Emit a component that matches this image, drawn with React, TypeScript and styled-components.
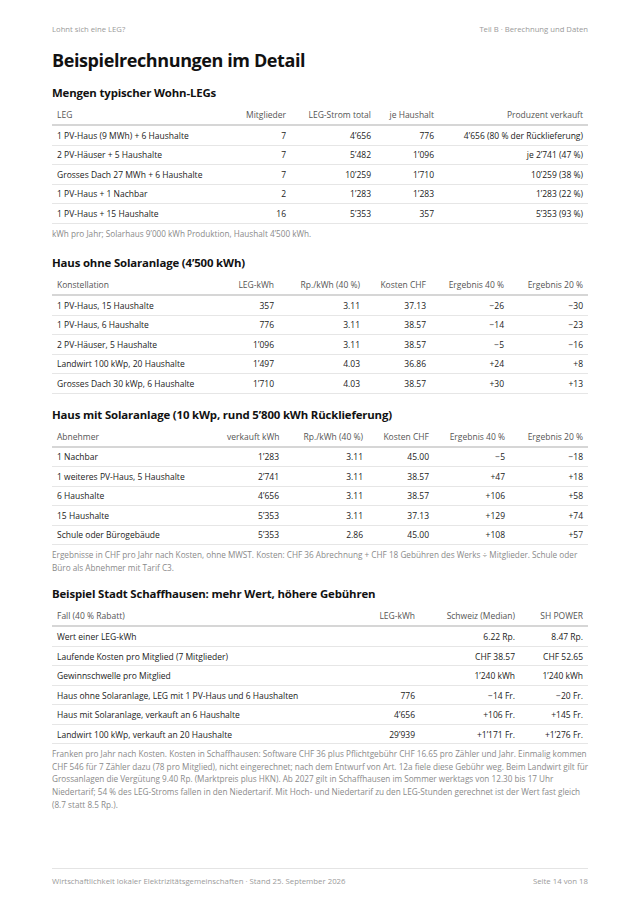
import React from "react";
import styled, { createGlobalStyle } from "styled-components";

const Global = createGlobalStyle`
  html, body { margin: 0; padding: 0; background: #fff; }
  body { font-family: "Open Sans", "Noto Sans", sans-serif; color: #1a1a1a; }
`;

const Page = styled.div`
  width: 640px;
  min-height: 906px;
  box-sizing: border-box;
  padding: 24px 52px 20px;
  display: flex;
  flex-direction: column;
`;

const RunningHead = styled.header`
  display: flex;
  justify-content: space-between;
  font-size: 7.7px;
  color: #9a9a9a;
  line-height: 10px;
`;

const Title = styled.h1`
  margin: 13px 0 0;
  font-size: 18px;
  letter-spacing: -0.4px;
  font-weight: 700;
  color: #111;
  line-height: 26px;
`;

const SectionTitle = styled.h2<{ $top: number }>`
  margin: ${(p) => p.$top}px 0 4px;
  font-size: 11.4px;
  letter-spacing: -0.15px;
  font-weight: 700;
  color: #111;
  line-height: 16px;
`;

const Table = styled.table`
  width: 100%;
  border-collapse: collapse;
  table-layout: fixed;
  font-size: 8.5px;
`;

const Col = styled.col<{ $w: number }>`
  width: ${(p) => p.$w}px;
`;

const Th = styled.th<{ $right?: boolean }>`
  font-weight: 400;
  color: #555;
  text-align: ${(p) => (p.$right ? "right" : "left")};
  padding: 0 5px;
  height: 19px;
  border-bottom: 2px solid #d6d6d6;
  white-space: nowrap;
`;

const Td = styled.td<{ $right?: boolean }>`
  color: #222;
  text-align: ${(p) => (p.$right ? "right" : "left")};
  padding: 0 5px;
  height: 18.5px;
  border-bottom: 1px solid #e6e6e6;
  white-space: nowrap;
`;

const Note = styled.p`
  margin: 4px 0 0;
  font-size: 8.2px;
  line-height: 12.6px;
  color: #8a8a8a;
`;

const Footer = styled.footer`
  margin-top: auto;
  border-top: 1px solid #e4e4e4;
  padding-top: 7px;
  display: flex;
  justify-content: space-between;
  font-size: 7.8px;
  color: #9a9a9a;
  line-height: 10px;
`;

type TableSpec = {
  widths: number[];
  head: string[];
  rows: string[][];
};

const DataTable: React.FC<TableSpec> = ({ widths, head, rows }) => (
  <Table>
    <colgroup>
      {widths.map((w, i) => (
        <Col key={i} $w={w} />
      ))}
    </colgroup>
    <thead>
      <tr>
        {head.map((h, i) => (
          <Th key={i} $right={i > 0}>
            {h}
          </Th>
        ))}
      </tr>
    </thead>
    <tbody>
      {rows.map((r, ri) => (
        <tr key={ri}>
          {r.map((c, ci) => (
            <Td key={ci} $right={ci > 0}>
              {c}
            </Td>
          ))}
        </tr>
      ))}
    </tbody>
  </Table>
);

const t1: TableSpec = {
  widths: [180, 59, 85, 63, 149],
  head: ["LEG", "Mitglieder", "LEG-Strom total", "je Haushalt", "Produzent verkauft"],
  rows: [
    ["1 PV-Haus (9 MWh) + 6 Haushalte", "7", "4’656", "776", "4’656 (80 % der Rücklieferung)"],
    ["2 PV-Häuser + 5 Haushalte", "7", "5’482", "1’096", "je 2’741 (47 %)"],
    ["Grosses Dach 27 MWh + 6 Haushalte", "7", "10’259", "1’710", "10’259 (38 %)"],
    ["1 PV-Haus + 1 Nachbar", "2", "1’283", "1’283", "1’283 (22 %)"],
    ["1 PV-Haus + 15 Haushalte", "16", "5’353", "357", "5’353 (93 %)"],
  ],
};

const t2: TableSpec = {
  widths: [170, 57, 86, 66, 78, 79],
  head: ["Konstellation", "LEG-kWh", "Rp./kWh (40 %)", "Kosten CHF", "Ergebnis 40 %", "Ergebnis 20 %"],
  rows: [
    ["1 PV-Haus, 15 Haushalte", "357", "3.11", "37.13", "−26", "−30"],
    ["1 PV-Haus, 6 Haushalte", "776", "3.11", "38.57", "−14", "−23"],
    ["2 PV-Häuser, 5 Haushalte", "1’096", "3.11", "38.57", "−5", "−16"],
    ["Landwirt 100 kWp, 20 Haushalte", "1’497", "4.03", "36.86", "+24", "+8"],
    ["Grosses Dach 30 kWp, 6 Haushalte", "1’710", "4.03", "38.57", "+30", "+13"],
  ],
};

const t3: TableSpec = {
  widths: [170, 62, 84, 66, 76, 78],
  head: ["Abnehmer", "verkauft kWh", "Rp./kWh (40 %)", "Kosten CHF", "Ergebnis 40 %", "Ergebnis 20 %"],
  rows: [
    ["1 Nachbar", "1’283", "3.11", "45.00", "−5", "−18"],
    ["1 weiteres PV-Haus, 5 Haushalte", "2’741", "3.11", "38.57", "+47", "+18"],
    ["6 Haushalte", "4’656", "3.11", "38.57", "+106", "+58"],
    ["15 Haushalte", "5’353", "3.11", "37.13", "+129", "+74"],
    ["Schule oder Bürogebäude", "5’353", "2.86", "45.00", "+108", "+57"],
  ],
};

const t4: TableSpec = {
  widths: [310, 58, 100, 68],
  head: ["Fall (40 % Rabatt)", "LEG-kWh", "Schweiz (Median)", "SH POWER"],
  rows: [
    ["Wert einer LEG-kWh", "", "6.22 Rp.", "8.47 Rp."],
    ["Laufende Kosten pro Mitglied (7 Mitglieder)", "", "CHF 38.57", "CHF 52.65"],
    ["Gewinnschwelle pro Mitglied", "", "1’240 kWh", "1’240 kWh"],
    ["Haus ohne Solaranlage, LEG mit 1 PV-Haus und 6 Haushalten", "776", "−14 Fr.", "−20 Fr."],
    ["Haus mit Solaranlage, verkauft an 6 Haushalte", "4’656", "+106 Fr.", "+145 Fr."],
    ["Landwirt 100 kWp, verkauft an 20 Haushalte", "29’939", "+1’171 Fr.", "+1’276 Fr."],
  ],
};

export default function App() {
  return (
    <>
      <Global />
      <Page>
        <RunningHead>
          <span>Lohnt sich eine LEG?</span>
          <span>Teil B · Berechnung und Daten</span>
        </RunningHead>
        <Title>Beispielrechnungen im Detail</Title>

        <SectionTitle $top={12}>Mengen typischer Wohn-LEGs</SectionTitle>
        <DataTable {...t1} />
        <Note>kWh pro Jahr; Solarhaus 9’000 kWh Produktion, Haushalt 4’500 kWh.</Note>

        <SectionTitle $top={15}>Haus ohne Solaranlage (4’500 kWh)</SectionTitle>
        <DataTable {...t2} />

        <SectionTitle $top={13}>Haus mit Solaranlage (10 kWp, rund 5’800 kWh Rücklieferung)</SectionTitle>
        <DataTable {...t3} />
        <Note>
          Ergebnisse in CHF pro Jahr nach Kosten, ohne MWST. Kosten: CHF 36 Abrechnung + CHF 18 Gebühren des
          Werks ÷ Mitglieder. Schule oder Büro als Abnehmer mit Tarif C3.
        </Note>

        <SectionTitle $top={12}>Beispiel Stadt Schaffhausen: mehr Wert, höhere Gebühren</SectionTitle>
        <DataTable {...t4} />
        <Note>
          Franken pro Jahr nach Kosten. Kosten in Schaffhausen: Software CHF 36 plus Pflichtgebühr CHF 16.65 pro
          Zähler und Jahr. Einmalig kommen CHF 546 für 7 Zähler dazu (78 pro Mitglied), nicht eingerechnet; nach dem
          Entwurf von Art. 12a fiele diese Gebühr weg. Beim Landwirt gilt für Grossanlagen die Vergütung 9.40 Rp.
          (Marktpreis plus HKN). Ab 2027 gilt in Schaffhausen im Sommer werktags von 12.30 bis 17 Uhr Niedertarif; 54
          % des LEG-Stroms fallen in den Niedertarif. Mit Hoch- und Niedertarif zu den LEG-Stunden gerechnet ist der
          Wert fast gleich (8.7 statt 8.5 Rp.).
        </Note>

        <Footer>
          <span>Wirtschaftlichkeit lokaler Elektrizitätsgemeinschaften · Stand 25. September 2026</span>
          <span>Seite 14 von 18</span>
        </Footer>
      </Page>
    </>
  );
}
